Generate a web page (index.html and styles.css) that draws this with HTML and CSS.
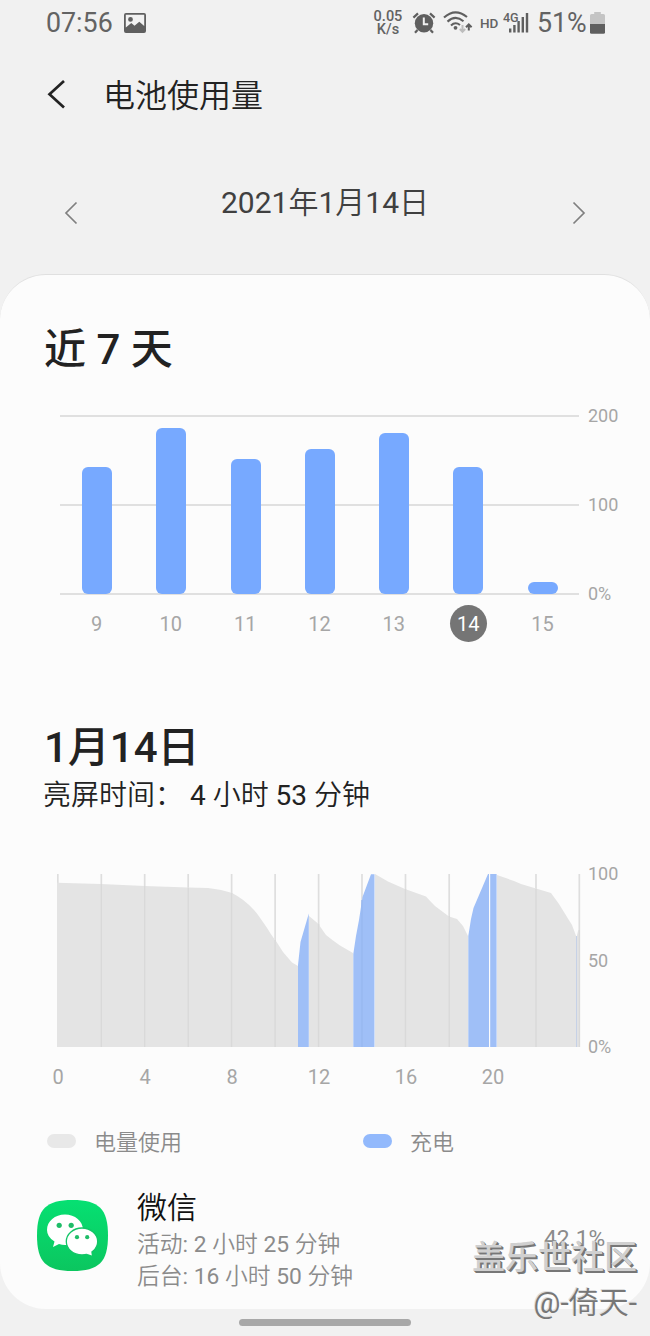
FILE: index.html
```html
<!DOCTYPE html>
<html lang="zh-CN">
<head>
    <meta charset="UTF-8">
    <meta name="viewport" content="width=device-width, initial-scale=1.0">
    <title>电池使用量</title>
    <link rel="stylesheet" href="styles.css">
</head>
<body>
    <div class="status-bar">
        <span class="clock">07:56</span>
        <svg class="icon-picture" width="22" height="20" viewBox="0 0 22 20">
            <path fill="#5f5f5f" fill-rule="evenodd" d="M2 0H20Q22 0 22 2V18Q22 20 20 20H2Q0 20 0 18V2Q0 0 2 0ZM1.8 1.8V14.5L7.3 10L10.5 12.8L15.3 8.8L20.2 13V1.8ZM6.5 4A2.4 2.4 0 1 1 6.5 8.8A2.4 2.4 0 1 1 6.5 4Z"/>
        </svg>
        <div class="net-speed"><span>0.05</span><span>K/s</span></div>
        <svg class="icon-alarm" width="24" height="22" viewBox="0 0 24 22">
            <circle cx="12" cy="11.3" r="9.2" fill="#5f5f5f"/>
            <path d="M1.4 5.6L6 1.4M22.6 5.6L18 1.4M5.5 18L3 20.8M18.5 18L21 20.8" stroke="#5f5f5f" stroke-width="2.2" fill="none"/>
            <path d="M11.8 5.4V12.2H16.2" stroke="#f1f1f1" stroke-width="2" fill="none"/>
        </svg>
        <svg class="icon-wifi" width="30" height="23" viewBox="0 0 30 23">
            <g fill="none" stroke="#5f5f5f" stroke-width="2.1">
                <path d="M1 6.6Q12 -3.6 24 6"/>
                <path d="M4.5 10.6Q12.3 3.5 20.5 10.2"/>
                <path d="M8 14.4Q12.3 10.3 17 14"/>
            </g>
            <circle cx="12.5" cy="16.8" r="1.9" fill="#5f5f5f"/>
            <path d="M19.5 14V20.5M16.8 18L19.5 20.8L22.2 18" stroke="#bdbdbd" stroke-width="2" fill="none"/>
            <path d="M25.8 19.5V13.5M23 16.2L25.8 13.4L28.6 16.2" stroke="#5f5f5f" stroke-width="2" fill="none"/>
        </svg>
        <span class="hd">HD</span>
        <div class="signal">
            <span class="signal-type">4G</span>
            <svg width="21" height="20" viewBox="0 0 21 20">
                <path fill="#5f5f5f" d="M1 15.5h2.4v4H1zM5.2 12h2.4v7.5H5.2zM9.4 8h2.4v11.5H9.4zM13.6 4h2.4v15.5h-2.4zM17.8 0h2.4v19.5h-2.4z"/>
            </svg>
        </div>
        <span class="battery-level">51%</span>
        <svg class="icon-battery" width="15" height="22" viewBox="0 0 15 22">
            <path fill="#c4c4c4" d="M4.2 0h6.6v2H13.5q1.5 0 1.5 1.5V12H0V3.5Q0 2 1.5 2H4.2z"/>
            <path fill="#5f5f5f" d="M0 12H15V20.3q0 1.5-1.5 1.5H1.5Q0 21.8 0 20.3z"/>
        </svg>
    </div>

    <header class="title-bar">
        <svg width="19" height="30" viewBox="0 0 19 30">
            <path d="M17 1L2.5 14.2L17 27.5" fill="none" stroke="#222" stroke-width="2.7"/>
        </svg>
        <h1>电池使用量</h1>
    </header>

    <div class="date-bar">
        <svg class="arrow" width="14" height="24" viewBox="0 0 14 24">
            <path d="M12.5 1.5L2 12L12.5 22.5" fill="none" stroke="#808080" stroke-width="1.7"/>
        </svg>
        <span class="date">2021年1月14日</span>
        <svg class="arrow" width="14" height="24" viewBox="0 0 14 24">
            <path d="M1.5 1.5L12 12L1.5 22.5" fill="none" stroke="#808080" stroke-width="1.7"/>
        </svg>
    </div>

    <main class="card">
        <h2 class="week-title">近 7 天</h2>

        <div class="week-chart">
            <div class="week-plot">
                <div class="grid-lines"><i></i><i></i><i></i></div>
                <div class="bars">
                    <div class="bar" style="height: 127px"></div>
                    <div class="bar" style="height: 166px"></div>
                    <div class="bar" style="height: 135px"></div>
                    <div class="bar" style="height: 145.5px"></div>
                    <div class="bar" style="height: 161px"></div>
                    <div class="bar" style="height: 127px"></div>
                    <div class="bar" style="height: 12px"></div>
                </div>
            </div>
            <div class="y-axis"><span>200</span><span>100</span><span>0%</span></div>
        </div>
        <div class="week-days">
            <span>9</span>
            <span>10</span>
            <span>11</span>
            <span>12</span>
            <span>13</span>
            <span class="selected">14</span>
            <span>15</span>
        </div>

        <h2 class="day-title">1月14日</h2>
        <p class="screen-time">亮屏时间： 4 小时 53 分钟</p>

        <div class="day-chart">
            <svg width="524" height="173" viewBox="57 874 524 173">
                <!-- hour lines -->
                <path d="M57.8 874V1047M101.3 874V1047M144.7 874V1047M188.2 874V1047M231.6 874V1047M275.1 874V1047M318.6 874V1047M362 874V1047M405.5 874V1047M449.2 874V1047M492.5 874V1047M536 874V1047M579.3 874V1047" stroke="#dedede" stroke-width="1.7"/>
                <!-- usage -->
                <path fill="#e4e4e4" d="M57 1047V882.7L101 884L145 886L188 887.5L208 888Q222 889.5 232 893Q244 899 254 910C262 919 269 932 276 941L283 952L292 962.5L298 966V1047ZM309 1047V916L318 923.5L326 935Q332 940 340 945.5L353 953V1047ZM375 1047V874L388 881.5L405 889L426 896.5Q430 901 435 906L449 916.5L457 919L463 926L468 936V1047ZM497 1047V875L514 881L521 884L536 888.5L551 893L559 904L567 917L572 925L576.5 937L578 931L580 930V1047Z"/>
                <!-- charging -->
                <path fill="#9fbff7" d="M298 1047V965L300.5 942L308.8 913.5V1047ZM353.3 1047V954L356 936L359 920L362.5 897L371 874.3H374.5V1047ZM468.3 1047V936L471 919L473.5 908L488 874H489V1047ZM490.2 1047V874H496.6V1047Z"/>
                <path d="M576.6 936V1047" stroke="#c3cfe6" stroke-width="1"/>
                <path d="M101.3 884V1047M144.7 886V1047M188.2 888V1047M231.6 893V1047M275.1 940V1047M318.6 924V1047M405.5 889V1047M449.2 916V1047M536 889V1047M579.3 930V1047" stroke="#d9d9d9" stroke-width="1.4"/>
                <path d="M362 900V1047" stroke="#98b8ef" stroke-width="1.4"/>
            </svg>
            <div class="y-axis"><span>100</span><span>50</span><span>0%</span></div>
        </div>
        <div class="hours">
            <span>0</span>
            <span>4</span>
            <span>8</span>
            <span>12</span>
            <span>16</span>
            <span>20</span>
        </div>

        <div class="legend">
            <div class="legend-item"><i class="pill"></i>电量使用</div>
            <div class="legend-item"><i class="pill charging"></i>充电</div>
        </div>

        <div class="app">
            <svg class="app-icon" width="71" height="71" viewBox="0 0 71 71">
                <defs>
                    <linearGradient id="wechat" x1="0" y1="0" x2="0" y2="1">
                        <stop offset="0" stop-color="#06e072"/>
                        <stop offset="1" stop-color="#0bc65f"/>
                    </linearGradient>
                </defs>
                <path fill="url(#wechat)" d="M35.5 0C62 0 71 9 71 35.5S62 71 35.5 71S0 62 0 35.5S9 0 35.5 0Z"/>
                <path fill="#fff" d="M28 14.5C38 14.5 46 21 46 30S38 45 28 45Q25 45 22 44L16 47L17.5 41.5Q10 37 10 30C10 21 18 14.5 28 14.5Z"/>
                <ellipse cx="45" cy="41.5" rx="15.7" ry="13.5" fill="#fff" stroke="#13c567" stroke-width="1.3"/>
                <path fill="#fff" d="M49 53.5L54.8 55.5L54 50Z"/>
                <g fill="#1fbd68">
                    <circle cx="22.2" cy="25.3" r="2.6"/>
                    <circle cx="34.2" cy="25.3" r="2.6"/>
                    <circle cx="40" cy="37.2" r="2.1"/>
                    <circle cx="50.2" cy="37.2" r="2.1"/>
                </g>
            </svg>
            <div class="app-info">
                <h3>微信</h3>
                <p>活动: 2 小时 25 分钟</p>
                <p>后台: 16 小时 50 分钟</p>
            </div>
            <span class="app-percent">42.1%</span>
        </div>
    </main>

    <div class="home-bar"></div>

    <div class="watermark">
        <strong>盖乐世社区</strong>
        <span>@-倚天-</span>
    </div>
</body>
</html>
```

FILE: styles.css
```css
/* General Reset */
* {
    margin: 0;
    padding: 0;
    box-sizing: border-box;
}

body {
    position: relative;
    width: 650px;
    height: 1336px;
    overflow: hidden;
    font-family: Roboto, "Noto Sans CJK SC DemiLight", "Noto Sans CJK SC", sans-serif;
    background-color: #f1f1f1;
    color: #222;
}

svg {
    display: block;
    flex-shrink: 0;
}

/* Status bar */
.status-bar {
    display: flex;
    align-items: center;
    height: 45px;
    padding-left: 46px;
    color: #636363;
}

.clock {
    width: 78px;
    font-size: 26.8px;
}

.net-speed {
    display: flex;
    flex-direction: column;
    align-items: center;
    width: 30px;
    margin-left: 227px;
    font-size: 14.5px;
    font-weight: 500;
    line-height: 13px;
}

.icon-alarm {
    margin-left: 9px;
}

.icon-wifi {
    margin-left: 7px;
}

.hd {
    width: 20px;
    margin-left: 7px;
    font-size: 13.5px;
    font-weight: 500;
}

.signal {
    display: flex;
    align-items: flex-start;
    margin-left: 3px;
}

.signal-type {
    width: 5px;
    font-size: 12.5px;
    font-weight: 500;
    line-height: 9px;
    white-space: nowrap;
}

.battery-level {
    width: 53px;
    margin-left: 8px;
    font-size: 26.8px;
}

/* Header */
.title-bar {
    display: flex;
    align-items: center;
    height: 100px;
    padding-left: 47px;
}

.title-bar h1 {
    margin: 2px 0 0 37px;
    font-size: 32px;
    font-weight: 400;
    line-height: 40px;
}

.date-bar {
    display: flex;
    justify-content: space-between;
    align-items: flex-start;
    height: 129px;
    padding: 38px 64px 0;
}

.arrow {
    margin-top: 18px;
}

.date {
    font-size: 30px;
    line-height: 40px;
    color: #404040;
}

/* Card */
.card {
    height: 1035px;
    padding-top: 50px;
    background-color: #fcfcfc;
    border-top: 1px solid #e0e0e0;
    border-radius: 46px;
}

h2 {
    padding-left: 44px;
    font-family: Roboto, "Noto Sans CJK SC", sans-serif;
    font-size: 42px;
    font-weight: 500;
    line-height: 50px;
}

.y-axis {
    display: flex;
    flex-direction: column;
    justify-content: space-between;
    margin: -10px 0;
    font-size: 18px;
    line-height: 22px;
    color: #a6a6a6;
}

/* Last 7 days */
.week-chart {
    display: flex;
    height: 180px;
    margin-top: 40px;
    padding-left: 60px;
}

.week-plot {
    display: grid;
    width: 519px;
    margin-right: 9px;
}

.grid-lines,
.bars {
    grid-area: 1 / 1;
    display: flex;
    justify-content: space-between;
}

.grid-lines {
    flex-direction: column;
}

.grid-lines i {
    height: 2px;
    background-color: #e0e0e0;
}

.bars {
    align-items: flex-end;
    padding: 0 21.5px 1px 22px;
}

.bar {
    width: 30px;
    background-color: #77a9ff;
    border-radius: 6px;
}

.week-days {
    display: flex;
    justify-content: space-between;
    width: 483px;
    margin: 10px 0 0 78px;
    font-size: 20px;
    line-height: 38px;
    text-align: center;
    color: #a6a6a6;
}

.week-days span {
    width: 37px;
    height: 37px;
}

.week-days .selected {
    background-color: #757575;
    border-radius: 50%;
    color: #fff;
}

/* Day details */
.day-title {
    margin-top: 81px;
}

.screen-time {
    margin-top: 7px;
    padding-left: 43px;
    font-size: 28px;
    line-height: 32px;
}

.day-chart {
    display: flex;
    height: 173px;
    margin-top: 62px;
    padding-left: 57px;
}

.day-chart .y-axis {
    margin: -11px 0 -11px 7px;
}

.hours {
    display: flex;
    justify-content: space-between;
    width: 475px;
    margin: 18px 0 0 38px;
    font-size: 20px;
    line-height: 24px;
    text-align: center;
    color: #a6a6a6;
}

.hours span {
    width: 40px;
}

.legend {
    display: flex;
    margin-top: 40px;
    padding-left: 47px;
    font-size: 22px;
    line-height: 28px;
    color: #8b8b8b;
}

.legend-item {
    display: flex;
    flex-shrink: 0;
    width: 316px;
}

.pill {
    width: 29px;
    height: 14px;
    margin: 5px 18px 0 0;
    background-color: #e8e8e8;
    border-radius: 7px;
}

.pill.charging {
    background-color: #92b9fc;
}

/* App usage */
.app {
    display: flex;
    margin-top: 32px;
    padding-left: 37px;
}

.app-icon {
    margin-top: 11px;
}

.app-info {
    width: 407px;
    margin-left: 29px;
}

.app-info h3 {
    margin-bottom: 2px;
    font-size: 30px;
    font-weight: 400;
    line-height: 38px;
    color: #111;
}

.app-info p {
    font-size: 22.8px;
    line-height: 32px;
    color: #8b8b8b;
}

.app-percent {
    margin-top: 36px;
    font-size: 22.8px;
    line-height: 28px;
    color: #8b8b8b;
}

.home-bar {
    width: 172px;
    height: 7px;
    margin: 10px 0 0 239px;
    background-color: #a8a8a8;
    border-radius: 4px;
}

/* Watermark */
.watermark {
    position: absolute;
    right: 13px;
    bottom: 11px;
    display: flex;
    flex-direction: column;
    align-items: flex-end;
    color: #d0d0d0;
}

.watermark strong {
    margin-bottom: 4px;
    font-family: "Noto Sans CJK SC", sans-serif;
    font-size: 33px;
    font-weight: 500;
    line-height: 44px;
    text-shadow: 1px 1px 0 #777, 2px 2px 0 #777;
}

.watermark span {
    font-size: 30px;
    line-height: 44px;
    color: #777;
    text-shadow: -1px -1px 0 #ddd;
}
```
